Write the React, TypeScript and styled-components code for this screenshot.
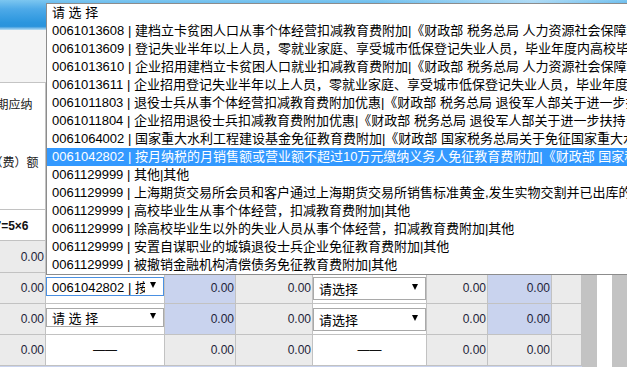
import React from 'react';
import styled, { createGlobalStyle } from 'styled-components';

const GlobalStyle = createGlobalStyle`
  html, body {
    margin: 0;
    padding: 0;
    overflow: hidden;
  }
  body {
    font-family: "Liberation Sans", "Noto Sans CJK SC", sans-serif;
    background: #f4f4f4;
  }
`;

const OPTIONS = [
    '0061013608 | 建档立卡贫困人口从事个体经营扣减教育费附加|《财政部 税务总局 人力资源社会保障部 国务院扶贫办关于进一步支持和促进重点群体创业就业有关税收政策的通知》',
    '0061013609 | 登记失业半年以上人员，零就业家庭、享受城市低保登记失业人员，毕业年度内高校毕业生从事个体经营扣减教育费附加',
    '0061013610 | 企业招用建档立卡贫困人口就业扣减教育费附加|《财政部 税务总局 人力资源社会保障部 国务院扶贫办关于进一步支持和促进重点群体创业就业有关税收政策的通知》',
    '0061013611 | 企业招用登记失业半年以上人员，零就业家庭、享受城市低保登记失业人员，毕业年度内高校毕业生扣减教育费附加',
    '0061011803 | 退役士兵从事个体经营扣减教育费附加优惠|《财政部 税务总局 退役军人部关于进一步扶持自主就业退役士兵创业就业有关税收政策的通知》',
    '0061011804 | 企业招用退役士兵扣减教育费附加优惠|《财政部 税务总局 退役军人部关于进一步扶持自主就业退役士兵创业就业有关税收政策的通知》',
    '0061064002 | 国家重大水利工程建设基金免征教育费附加|《财政部 国家税务总局关于免征国家重大水利工程建设基金的城市维护建设税和教育费附加的通知》',
    '0061042802 | 按月纳税的月销售额或营业额不超过10万元缴纳义务人免征教育费附加|《财政部 国家税务总局关于扩大有关政府性基金免征范围的通知》',
    '0061129999 | 其他|其他',
    '0061129999 | 上海期货交易所会员和客户通过上海期货交易所销售标准黄金,发生实物交割并已出库的免征教育费附加|其他',
    '0061129999 | 高校毕业生从事个体经营，扣减教育费附加|其他',
    '0061129999 | 除高校毕业生以外的失业人员从事个体经营，扣减教育费附加|其他',
    '0061129999 | 安置自谋职业的城镇退役士兵企业免征教育费附加|其他',
    '0061129999 | 被撤销金融机构清偿债务免征教育费附加|其他',
];
const ACTIVE = 7;

type Fill = 'gray' | 'blue' | 'white';
type Control = 'chosen' | 'empty' | 'dash';

// one row of the grid: what the two select columns show and whether the blue columns are shaded
const ROWS: { left: Control; right: Control; shaded: boolean }[] = [
    { left: 'empty', right: 'empty', shaded: true },
    { left: 'chosen', right: 'empty', shaded: true },
    { left: 'empty', right: 'empty', shaded: true },
    { left: 'dash', right: 'dash', shaded: false },
];

const FILLS: Record<Fill, string> = {
    gray: '#ebebeb',
    blue: '#c9d3ee',
    white: '#ffffff',
};

export default function App() {
    return (
        <Page>
            <GlobalStyle />
            <Banner />
            <ToolbarArea />
            <Body>
                <Grid>
                    <HeaderCell>
                        <HeaderLine>本期应纳</HeaderLine>
                        <HeaderLine>税（费）额</HeaderLine>
                    </HeaderCell>
                    <BlankHeader $span={7} />

                    <FormulaCell>7=5×6</FormulaCell>
                    <BlankHeader $span={7} />

                    {ROWS.map((row, i) => (
                        <React.Fragment key={i}>
                            <NumCell $fill="gray">0.00</NumCell>
                            <ControlCell control={row.left} spaced />
                            <NumCell $fill={row.shaded ? 'blue' : 'gray'}>0.00</NumCell>
                            <NumCell $fill="gray">0.00</NumCell>
                            <ControlCell control={row.right} tall />
                            <NumCell $fill="gray">0.00</NumCell>
                            <NumCell $fill={row.shaded ? 'blue' : 'gray'}>0.00</NumCell>
                            <NumCell $fill="gray" />
                        </React.Fragment>
                    ))}
                    <FooterBar />
                </Grid>
                <Strip $fill="#c3c3c3" $width={15} />
                <Strip $fill="#ffffff" $width={15} />
                <Strip $fill="#c3c3c3" $width={0} $grow />
            </Body>

            <Dropdown>
                <Option>请 选 择</Option>
                {OPTIONS.map((text, i) => (
                    <Option key={i} $active={i === ACTIVE}>{text}</Option>
                ))}
            </Dropdown>
        </Page>
    );
}

function ControlCell({ control, spaced, tall }: { control: Control; spaced?: boolean; tall?: boolean }) {
    if (control === 'dash') {
        return <DashCell>——</DashCell>;
    }
    const label = control === 'chosen' ? '0061042802 | 按月纳税的月销售额' : spaced ? '请 选 择' : '请选择';
    return (
        <SelectCell>
            <FakeSelect $focus={control === 'chosen'} $tall={tall}>
                <SelectText>{label}</SelectText>
                <Caret />
            </FakeSelect>
        </SelectCell>
    );
}

const Page = styled.div`
    position: relative;
    width: 627px;
    height: 367px;
    overflow: hidden;
    background: #f4f4f4;
`;

const Banner = styled.div`
    height: 30px;
    background:
        linear-gradient(90deg, rgba(255, 255, 255, 0) 60%, rgba(220, 238, 250, 0.55) 85%, rgba(255, 255, 255, 0) 100%),
        linear-gradient(180deg, #7cc6f0 0%, #4eaae8 30%, #2b96de 75%, #2a93dc 88%, #bcdff4 100%);
`;

const ToolbarArea = styled.div`
    height: 52px;
    background: #f4f4f4;
`;

const Body = styled.div`
    display: flex;
    align-items: stretch;
`;

/* the table is scrolled sideways, so its first column starts left of the window */
const Grid = styled.div`
    flex: none;
    margin-left: -28px;
    display: grid;
    grid-template-columns: 74px 119px 71px 77px 114px 61px 64px 30px;
    grid-template-rows: 127px 31px 32px 31px 31px 31px 6px;
    border-top: 1px solid #c4c4c4;
    background: #fff;
    font-size: 12px;
    color: #1e1e3a;
`;

const CellBase = styled.div`
    box-sizing: border-box;
    border-right: 1px solid #c2c2c2;
    border-bottom: 1px solid #c2c2c2;
    min-width: 0;
    overflow: hidden;
`;

const HeaderCell = styled(CellBase)`
    display: flex;
    flex-direction: column;
    align-items: center;
    gap: 40px;
    padding-top: 13px;
    background: #fff;
`;

const HeaderLine = styled.span`
    line-height: 18px;
    white-space: nowrap;
    color: #222;
`;

const BlankHeader = styled(CellBase)<{ $span: number }>`
    grid-column: span ${p => p.$span};
    background: #fff;
`;

const FormulaCell = styled(CellBase)`
    display: flex;
    align-items: center;
    justify-content: center;
    padding: 2px 0 0 6px;
    font-weight: bold;
    font-size: 12px;
    color: #111;
    background: #fff;
`;

const NumCell = styled(CellBase)<{ $fill: Fill }>`
    display: flex;
    align-items: center;
    justify-content: flex-end;
    padding-right: 1px;
    background: ${p => FILLS[p.$fill]};
`;

const SelectCell = styled(CellBase)`
    background: #fff;
    padding: 4px 0 0 0;
`;

const DashCell = styled(CellBase)`
    display: flex;
    align-items: center;
    justify-content: center;
    background: #fff;
    color: #111;
`;

const FakeSelect = styled.div<{ $focus?: boolean; $tall?: boolean }>`
    box-sizing: border-box;
    display: flex;
    align-items: center;
    height: ${p => (p.$tall ? 23 : 19)}px;
    border: 1px solid ${p => (p.$focus ? '#4a90e2' : '#a9a9a9')};
    background: #fff;
    padding: 0 7px 0 5px;
    font-size: 13px;
    color: #000;
`;

const SelectText = styled.span`
    flex: 1;
    min-width: 0;
    overflow: hidden;
    white-space: nowrap;
    margin-right: 5px;
`;

const Caret = styled.span`
    flex: none;
    width: 0;
    height: 0;
    border-left: 3px solid transparent;
    border-right: 3px solid transparent;
    border-top: 6px solid #000;
    margin-top: -4px;
`;

const FooterBar = styled.div`
    grid-column: 1 / -1;
    background: #c9d3ee;
`;

const Strip = styled.div<{ $fill: string; $width: number; $grow?: boolean }>`
    flex: ${p => (p.$grow ? '1' : 'none')};
    width: ${p => p.$width}px;
    background: ${p => p.$fill};
`;

const Dropdown = styled.div`
    position: absolute;
    left: 46px;
    top: 3px;
    width: 660px;
    border: 1px solid #8c8c8c;
    background: #fff;
`;

const Option = styled.div<{ $active?: boolean }>`
    height: 18px;
    line-height: 18px;
    padding-left: 5px;
    white-space: nowrap;
    overflow: hidden;
    font-size: 13px;
    color: ${p => (p.$active ? '#fff' : '#000')};
    background: ${p => (p.$active ? '#3399ff' : '#fff')};
`;
